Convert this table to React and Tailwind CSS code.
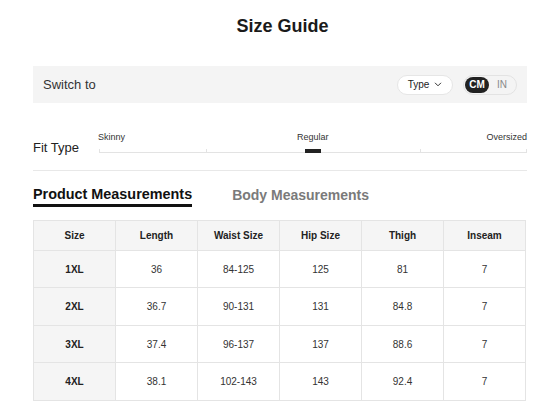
import React from 'react';

const columns = ['Size', 'Length', 'Waist Size', 'Hip Size', 'Thigh', 'Inseam'];

const rows = [
  ['1XL', '36', '84-125', '125', '81', '7'],
  ['2XL', '36.7', '90-131', '131', '84.8', '7'],
  ['3XL', '37.4', '96-137', '137', '88.6', '7'],
  ['4XL', '38.1', '102-143', '143', '92.4', '7'],
];

const rowHeights = ['h-[37px]', 'h-[38px]', 'h-[37px]', 'h-[38px]'];

function Chevron() {
  return (
    <svg width="8" height="5" viewBox="0 0 8 5" fill="none" stroke="#333" strokeWidth="1">
      <path d="M1 0.8l3 3 3-3" />
    </svg>
  );
}

function FitSlider() {
  return (
    <div className="flex-1 pt-[28px]">
      <div className="flex justify-between text-[9px] leading-[12px] text-[#333]">
        <span>Skinny</span>
        <span className="pl-[14px]">Regular</span>
        <span>Oversized</span>
      </div>
      <div className="relative h-[27px] ml-[1px]">
        <div className="absolute left-0 right-0 top-[9px] h-px bg-[#e3e3e3]" />
        {/* ticks */}
        <div className="absolute left-0 top-[6px] w-px h-[4px] bg-[#e3e3e3]" />
        <div className="absolute left-1/4 top-[6px] w-px h-[4px] bg-[#e3e3e3]" />
        <div className="absolute left-3/4 top-[6px] w-px h-[4px] bg-[#e3e3e3]" />
        <div className="absolute right-0 top-[6px] w-px h-[4px] bg-[#e3e3e3]" />
        {/* thumb */}
        <div className="absolute left-1/2 -translate-x-1/2 top-[6px] w-[16px] h-[4px] bg-[#222]" />
      </div>
    </div>
  );
}

export default function App() {
  return (
    <div className="w-[549px] h-[409px] bg-white pl-[33px] pr-[22px] text-[#222] font-['Liberation_Sans',Arial,sans-serif] overflow-hidden">
      <h1 className="h-[66px] pt-[14px] pl-[5px] text-center text-[18px] leading-[24px] font-bold text-[#1a1a1a]">
        Size Guide
      </h1>

      {/* unit switch bar */}
      <div className="h-[37px] bg-[#f4f4f4] flex items-center justify-between pl-[10px] pr-[10px]">
        <span className="text-[13px] text-[#333]">Switch to</span>
        <div className="flex items-center gap-[10px]">
          <button className="w-[56px] h-[20px] rounded-full bg-white border border-[#e6e6e6] flex items-center justify-center gap-[5px] text-[10px] text-[#222]">
            Type <Chevron />
          </button>
          <div className="w-[54px] h-[20px] rounded-full border border-[#e3e3e3] p-[1px] flex items-center">
            <span className="w-[24px] h-[16px] rounded-full bg-[#222] text-white text-[10px] font-bold flex items-center justify-center">
              CM
            </span>
            <span className="flex-1 text-center text-[10px] text-[#8a8a8a]">IN</span>
          </div>
        </div>
      </div>

      {/* fit type */}
      <div className="flex h-[68px] border-b border-[#e8e8e8]">
        <div className="w-[65px] pt-[37px] text-[13px] leading-[15px] text-[#222]">Fit Type</div>
        <FitSlider />
      </div>

      {/* tabs */}
      <div className="flex items-start gap-[40px] mt-[14px]">
        <div className="text-[14.4px] leading-[18px] font-bold text-[#111] pb-[1px] border-b-[3px] border-[#111]">
          Product Measurements
        </div>
        <div className="text-[14px] leading-[18px] font-bold text-[#7a7a7a] pt-[1px]">Body Measurements</div>
      </div>

      {/* table */}
      <div className="mt-[13px] w-[493px] border-l border-t border-[#e4e4e4] grid grid-cols-[repeat(6,82px)]">
        {columns.map((c) => (
          <div
            key={c}
            className="h-[30px] bg-[#f5f5f5] border-r border-b border-[#e4e4e4] flex items-center justify-center text-[10px] font-bold text-[#222]"
          >
            {c}
          </div>
        ))}
        {rows.map((r, ri) =>
          r.map((v, ci) => (
            <div
              key={ri + '-' + ci}
              className={
                rowHeights[ri] +
                ' border-r border-b border-[#e4e4e4] flex items-center justify-center text-[10px] ' +
                (ci === 0 ? 'bg-[#f5f5f5] font-bold text-[#222]' : 'bg-white text-[#333]')
              }
            >
              {v}
            </div>
          ))
        )}
      </div>
    </div>
  );
}
